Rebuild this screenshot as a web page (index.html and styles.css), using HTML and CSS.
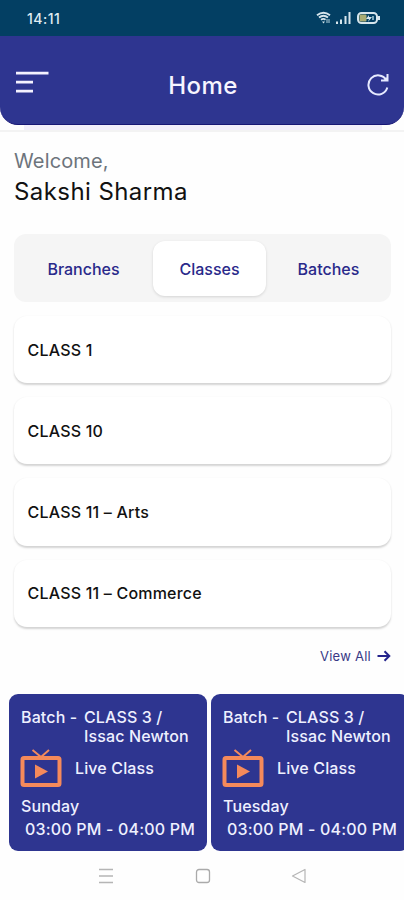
FILE: index.html
```html
<!DOCTYPE html>
<html lang="en">
<head>
<meta charset="utf-8">
<title>Home</title>
<link rel="stylesheet" href="styles.css">
</head>
<body>
<div class="status">
  <span class="clock">14:11</span>
  <svg class="status-icons" width="66" height="14" viewBox="0 0 66 14" fill="none">
    <path d="M1 4.200Q7.500-.8 14 4.200M3 6.500Q7.500 3 12 6.500M5 8.700Q7.500 7 9.500 8.700" stroke="#d7e6ed" stroke-width="1.900"/>
    <path d="M6 10.500h3l-1.500 2z" fill="#d7e6ed"/>
    <path d="M11 12V8m2 0v4" stroke="#b8d4df" stroke-width="1"/>
    <path d="M21 13v-2.500M25 13V8.500" stroke="#d7e6ed" stroke-width="2"/>
    <path d="M29.500 13V5M33.500 13V1" stroke="#d7e6ed" stroke-width="2"/>
    <rect x="42" y="2" width="19" height="10" rx="3.500" stroke="#d7e6ed" stroke-width="2"/>
    <rect x="43.500" y="3.500" width="7" height="7" rx="1" fill="#a9ac73"/>
    <path d="m53 4-3 4h3l-1 3 4-5h-3z" fill="#d7e6ed"/>
    <path d="M57 5v4" stroke="#7faabd" stroke-width="2"/>
    <path d="M63 5v4" stroke="#d7e6ed" stroke-width="2"/>
  </svg>
</div>
<header class="header">
  <svg class="menu" width="34" height="24" viewBox="0 0 34 24" stroke="#f4f2ff" stroke-width="2.700"><path d="M1 3.200h32.500M1 12.200h17M1 21.200h17"/></svg>
  <h1 class="title">Home</h1>
  <svg class="refresh" width="24" height="24" viewBox="0 0 24 24" fill="none" stroke="#e6eaff" stroke-width="2"><path d="M20.300 8A9.600 9.600 0 1 0 21.300 15.500M21.500 2v6.500H15"/><path d="M21.500 4.500v4h-4z" fill="#e6eaff" stroke="none"/></svg>
</header>
<div class="header-edge"></div>
<main class="main">
  <p class="welcome">Welcome,</p>
  <p class="name">Sakshi Sharma</p>
  <nav class="tabs">
    <span class="tab">Branches</span>
    <span class="tab active">Classes</span>
    <span class="tab">Batches</span>
  </nav>
  <ul class="classes">
    <li class="class">CLASS 1</li>
    <li class="class">CLASS 10</li>
    <li class="class">CLASS 11 – Arts</li>
    <li class="class">CLASS 11 – Commerce</li>
  </ul>
  <div class="view-all">View All
    <svg width="14" height="12" viewBox="0 0 14 12" fill="none" stroke="#24248c" stroke-width="2"><path d="M.5 6H12M7.500 1.200 12.300 6l-4.800 4.800"/></svg>
  </div>
</main>
<section class="batches">
  <article class="batch">
    <div class="row"><span class="label">Batch -</span><span>CLASS 3 /<br>Issac Newton</span></div>
    <div class="live">
      <svg width="42" height="38" viewBox="0 0 42 38" fill="none" stroke="#f58a5b"><path d="m12.500 1 8.500 7 8-7" stroke-width="2"/><rect x="2.500" y="9" width="37" height="27" rx="1.500" stroke-width="4"/><path d="M15 15.500v14l13-7z" fill="#f58a5b" stroke="none"/></svg>
      <span>Live Class</span>
    </div>
    <div class="day">Sunday</div>
    <div class="time">03:00 PM - 04:00 PM</div>
  </article>
  <article class="batch">
    <div class="row"><span class="label">Batch -</span><span>CLASS 3 /<br>Issac Newton</span></div>
    <div class="live">
      <svg width="42" height="38" viewBox="0 0 42 38" fill="none" stroke="#f58a5b"><path d="m12.500 1 8.500 7 8-7" stroke-width="2"/><rect x="2.500" y="9" width="37" height="27" rx="1.500" stroke-width="4"/><path d="M15 15.500v14l13-7z" fill="#f58a5b" stroke="none"/></svg>
      <span>Live Class</span>
    </div>
    <div class="day">Tuesday</div>
    <div class="time">03:00 PM - 04:00 PM</div>
  </article>
</section>
<footer class="system-nav">
  <svg width="16" height="16" viewBox="0 0 16 16" stroke="#b5b5b5" stroke-width="1.300"><path d="M1 1.500h14M1 8h14M1 14.500h14"/></svg>
  <svg width="16" height="16" viewBox="0 0 16 16" fill="none" stroke="#aaa" stroke-width="1.300"><rect x="1.500" y="1.500" width="13" height="13" rx="2.500"/></svg>
  <svg width="16" height="16" viewBox="0 0 16 16" fill="none" stroke="#b5b5b5" stroke-width="1.200" stroke-linejoin="round"><path d="M14 1.500v13L1.500 8z"/></svg>
</footer>
</body>
</html>
```
FILE: styles.css
```css
* { box-sizing: border-box; }
body { margin: 0; width: 404px; height: 900px; overflow: hidden; background: #fefefe; font-family: Inter, "Liberation Sans", sans-serif; color: #111; }
h1, p, ul { margin: 0; padding: 0; font-weight: 400; }
svg { display: block; flex: none; }
.status { height: 36px; padding: 0 22px 0 27px; display: flex; align-items: center; justify-content: space-between; background: #033f63; }
.clock { font-size: 14px; font-weight: 500; letter-spacing: .5px; color: #e0edf2; }
.header { height: 89px; padding: 10px 14px 0 15px; display: grid; grid-template-columns: 34px 1fr 24px; align-items: center; background: #2e3590; border-bottom: 1px solid #161675; border-radius: 0 0 18px 18px; }
.menu { margin-top: -7px; }
.refresh { margin-top: -3px; }
.title { margin-left: -9px; font-size: 24px; font-weight: 500; letter-spacing: .4px; text-align: center; color: #f6f4ff; }
.header-edge { height: 7px; background: linear-gradient(#f1eefb, #f1eefb) 24px 0 / 358px 5px no-repeat; border-bottom: 2px solid #f3f3f3; }
.main { padding: 17px 13px 0 14px; }
.welcome { font-size: 20px; line-height: 24px; letter-spacing: .15px; color: #6d747c; }
.name { margin-top: 4px; font-size: 24px; line-height: 30px; letter-spacing: .42px; }
.tabs { height: 68px; margin-top: 27px; padding: 7px 0 6px; display: grid; grid-template-columns: 139px 113px 125px; border-radius: 12px; background: #f5f5f5; }
.tab { display: flex; align-items: center; justify-content: center; border-radius: 12px; font-size: 16px; font-weight: 500; color: #29298a; }
.active { background: #fff; box-shadow: 0 1px 3px #0002; }
.classes { margin-top: 14px; display: grid; gap: 14px; list-style: none; }
.class { height: 67.2px; padding-left: 13.500px; display: flex; align-items: center; border-radius: 13px; background: #fff; box-shadow: 0 1.500px 2px #0000002b; font-size: 16px; font-weight: 500; letter-spacing: .2px; }
.view-all { height: 20px; margin-top: 19px; display: flex; align-items: center; justify-content: flex-end; gap: 6px; font-size: 13px; letter-spacing: .25px; color: #383886; }
.batches { margin: 28px 0 0 9px; display: flex; gap: 4px; }
.batch { flex: 0 0 198px; height: 157px; padding: 14px 0 0 12px; border-radius: 9px; background: #2e3590; color: #eef0ff; font-size: 16px; font-weight: 500; line-height: 19px; letter-spacing: .13px; white-space: nowrap; }
.row { display: flex; }
.label { width: 63px; }
.live { display: flex; align-items: center; gap: 13px; margin: 3px 0 0 -1px; }
.live span { padding-top: 2px; }
.day { margin-top: 10px; }
.time { margin: 4px 0 0 4px; letter-spacing: .19px; }
.system-nav { margin-top: 17px; padding: 0 97px 0 98px; display: flex; justify-content: space-between; }
```
